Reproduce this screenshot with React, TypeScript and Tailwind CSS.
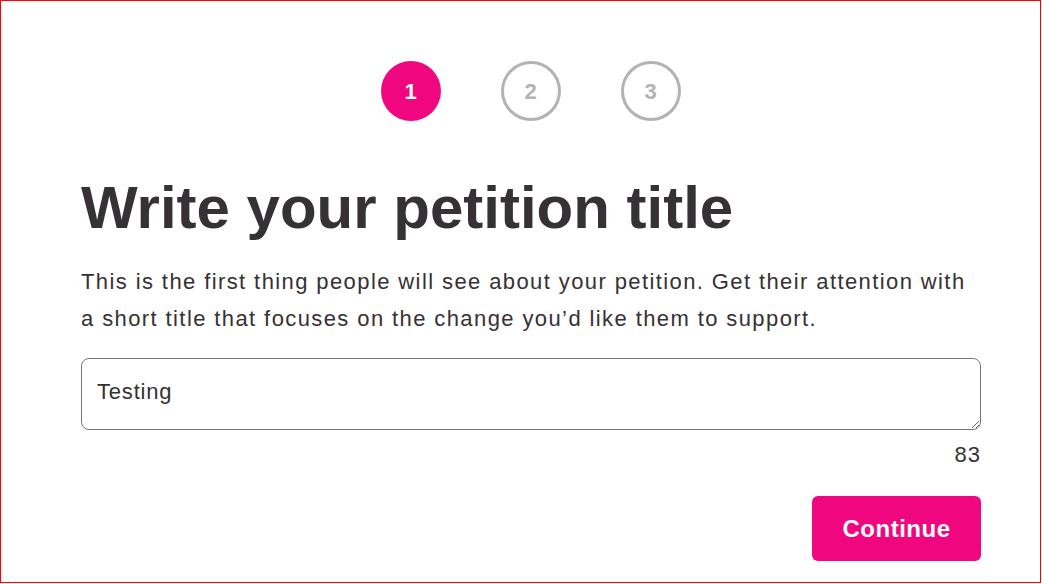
const steps = [1, 2, 3];

export default function App() {
  return (
    <div className="w-[1041px] h-[583px] border border-[#ff0000] bg-white" style={{ fontFamily: '"Liberation Sans", Arial, sans-serif' }}>
      <div className="w-[900px] pt-[60px] ml-[80px]">
        <div className="flex justify-center gap-[60px] -ml-[1px]">
          {steps.map((s) => (
            <div
              key={s}
              className={
                s === 1
                  ? "w-[60px] h-[60px] rounded-full bg-[#f0077f] text-white flex items-center justify-center text-[22px] font-bold"
                  : "w-[60px] h-[60px] rounded-full border-[3px] border-[#b3b3b3] text-[#b3b3b3] flex items-center justify-center text-[22px] font-bold"
              }
            >
              {s}
            </div>
          ))}
        </div>
        <h1 className="mt-[53px] text-[60px] leading-[68px] font-bold text-[#363134]">Write your petition title</h1>
        <p className="mt-[21px] text-[22px] leading-[37px] tracking-[1.4px] text-[#363134]">
          This is the first thing people will see about your petition. Get their attention with a short title that focuses on the change you’d like them to support.
        </p>
        <textarea
          className="mt-[21px] block w-[900px] h-[72px] border border-[#767676] rounded-[8px] px-[15px] pt-[20px] pb-[10px] text-[22px] leading-[26px] tracking-[0.8px] text-[#363134] outline-none"
          defaultValue="Testing"
          style={{ fontFamily: '"Liberation Sans", Arial, sans-serif' }}
        />
        <div className="text-right text-[22px] leading-[26px] tracking-[1px] text-[#363134] mt-[12px]">83</div>
        <div className="flex justify-end mt-[28px]">
          <button className="w-[169px] h-[65px] rounded-[6px] bg-[#f0077f] text-white text-[24px] tracking-[0.5px] font-bold">Continue</button>
        </div>
      </div>
    </div>
  );
}
